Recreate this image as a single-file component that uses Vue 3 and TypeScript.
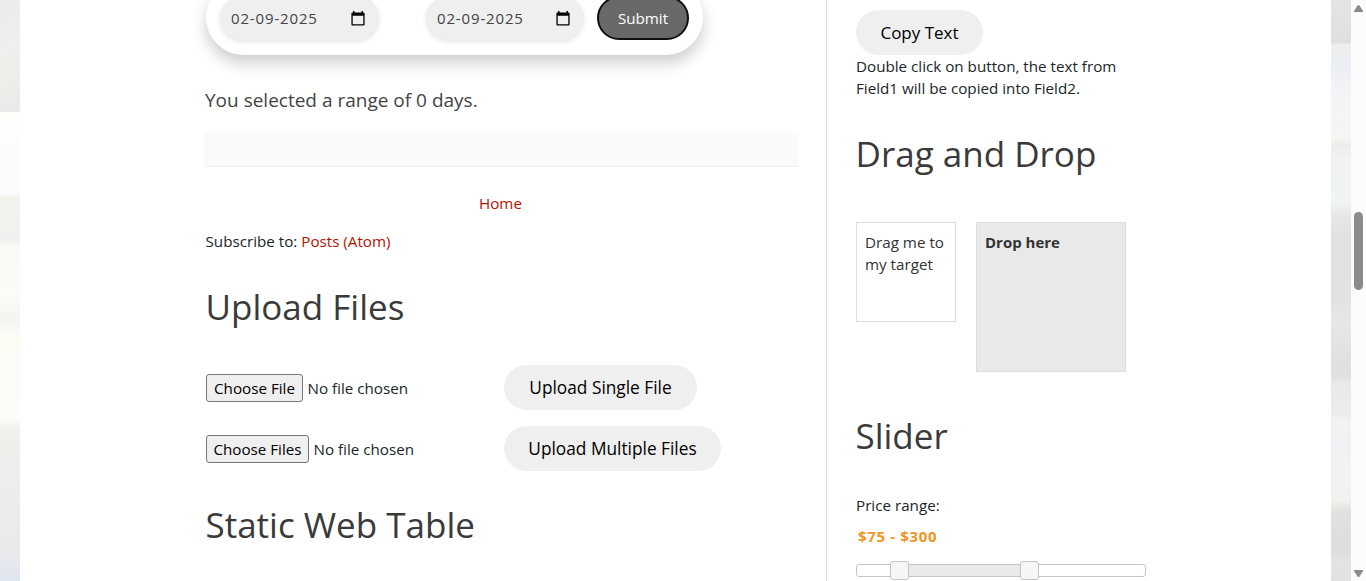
<script setup lang="ts">
import { ref } from 'vue'

const dates = ref(['02-09-2025', '02-09-2025'])
const uploads = [
  { choose: 'Choose File', action: 'Upload Single File', kind: 'single' },
  { choose: 'Choose Files', action: 'Upload Multiple Files', kind: 'multiple' },
]
const limit = 500
const low = 75
const high = 300
const pct = (v: number) => `${(v / limit) * 100}%`
</script>

<template>
  <div class="page">
    <div class="backdrop backdrop-left"></div>
    <main class="sheet">
      <section class="content">
        <div class="picker">
          <div v-for="(d, i) in dates" :key="i" class="date">
            <span class="date-text">{{ d }}</span>
            <svg class="calendar" viewBox="0 0 14 15" width="14" height="15">
              <path fill="#000" fill-rule="evenodd" d="M2 0h1.500v1.500h7V0H12v1.500h.6q1 0 1 1v11q0 1-1 1H1.400q-1 0-1-1v-11q0-1 1-1H2zM1.700 4.800v8.500h10.600V4.800z" />
            </svg>
          </div>
          <button class="submit">Submit</button>
        </div>
        <p class="result">You selected a range of 0 days.</p>
        <div class="post-footer"></div>
        <nav class="pager"><a>Home</a></nav>
        <p class="feed">Subscribe to: <a>Posts (Atom)</a></p>
        <h2 class="heading upload-heading">Upload Files</h2>
        <div v-for="u in uploads" :key="u.kind" class="upload-row">
          <div class="file">
            <button class="choose" :class="u.kind">{{ u.choose }}</button>
            <span class="nofile">No file chosen</span>
          </div>
          <button class="pill" :class="u.kind">{{ u.action }}</button>
        </div>
        <h2 class="heading table-heading">Static Web Table</h2>
      </section>
      <aside class="side">
        <button class="pill copy">Copy Text</button>
        <p class="hint">Double click on button, the text from<br />Field1 will be copied into Field2.</p>
        <h2 class="heading drag-heading">Drag and Drop</h2>
        <div class="dnd">
          <div class="drag">Drag me to<br />my target</div>
          <div class="drop">Drop here</div>
        </div>
        <h2 class="heading slider-heading">Slider</h2>
        <p class="price-label">Price range:</p>
        <p class="price">${{ low }} - ${{ high }}</p>
        <div class="slider">
          <div class="range" :style="{ left: pct(low), width: pct(high - low) }"></div>
          <div class="handle" :style="{ left: pct(low) }"></div>
          <div class="handle" :style="{ left: pct(high) }"></div>
        </div>
      </aside>
    </main>
    <div class="backdrop backdrop-right"></div>
    <div class="scrollbar">
      <svg width="9" height="7" viewBox="0 0 9 7"><path fill="#8b8b8b" d="M4.500 0q.6 0 1 .6L9 6v1H0V6L3.500.6q.4-.6 1-.6z" /></svg>
      <div class="thumb"></div>
      <svg width="9" height="7" viewBox="0 0 9 7"><path fill="#8b8b8b" d="M4.500 7q.6 0 1-.6L9 1V0H0v1l3.500 5.400q.4.6 1 .6z" /></svg>
    </div>
  </div>
</template>

<style>
html,
body {
  overflow: hidden;
}
</style>

<style scoped>
.page {
  display: flex;
  height: 581px;
  overflow: hidden;
  background: #fff;
  color: #212529;
  font-family: 'Open Sans', 'Noto Sans', sans-serif;
  font-size: 15.200px;
  line-height: 22px;
}
* {
  box-sizing: border-box;
}
p,
h2 {
  margin: 0;
  white-space: nowrap;
}
button {
  font: inherit;
  padding: 0;
  white-space: nowrap;
}
a {
  color: #b51200;
}
.backdrop {
  flex: none;
  width: 20px;
}
.backdrop-left {
  background:
    linear-gradient(142deg, #e9eaec 0, #eeeff1 44px, #ecefe9 58px, #e8eae8 100px) 0 0 / 20px 112px no-repeat,
    linear-gradient(#ebecec 0, #e9ebe8 110px, #fffffb 113px, #fcfcfe 155px, #fcfcfd 193px, #f2f3ed 198px, #f3f1ed 215px, #eff0ed 237px, #fafbf6 247px, #fcfaf5 280px, #fafbf7 300px, #f4f5f0 318px, #fcfcf5 335px, #fcfcf7 390px, #fdfdf7 419px, #f0f2eb 428px, #ecefea 455px, #ececee 490px, #eaeaed 550px, #dfe5ef 581px);
}
.backdrop-right {
  background: linear-gradient(#e5e4e3 0, #e0e0df 42px, #eff0ec 45px, #eaedf2 60px, #f2f4f7 90px, #f4f5f4 120px, #f5f5f1 139px, #ececeb 145px, #f0f2f4 160px, #f0f4f4 204px, #e6e7e6 215px, #e1e1e1 235px, #e2e2e2 300px, #e7e7e7 320px, #e0e0e0 365px, #e1e1e0 378px, #e9e9e9 382px, #ececeb 414px, #f2f2ef 420px, #eff1f4 442px, #f2f2f3 480px, #f1f1ee 500px, #e2e1df 512px, #dedddc 550px, #e3e3e3 560px, #e2e2e2 581px);
}
.sheet {
  display: flex;
  flex: none;
  width: 1311px;
  padding-left: 184px;
}
.content {
  width: 622px;
  flex: none;
  padding-left: 2px;
}
.picker {
  display: flex;
  align-items: center;
  width: 497px;
  height: 75px;
  margin-top: -20px;
  padding: 1px 14px 0;
  border-radius: 38px;
  background: #fff;
  box-shadow: 0 8px 16px rgba(0, 0, 0, 0.2);
}
.date {
  display: flex;
  align-items: center;
  justify-content: space-between;
  width: 159px;
  height: 44px;
  margin-right: 47px;
  padding: 0 14px 0 11px;
  border-radius: 22px;
  background: #efefef;
  color: #444;
  box-shadow: 0 2px 5px rgba(0, 0, 0, 0.1);
}
.date-text {
  font-size: 15px;
  letter-spacing: 0.850px;
}
.date + .date {
  width: 158px;
  margin-right: 13px;
}
.submit {
  width: 92px;
  height: 44px;
  border: 2px solid #111;
  border-radius: 22px;
  background: #696969;
  color: #fff;
}
.result {
  margin: 31px 0 0 -1px;
  line-height: 28px;
  font-size: 19px;
  color: #444;
}
.post-footer {
  width: 594px;
  height: 34px;
  margin: 19px 0 0 -2px;
  border-bottom: 1px solid #eee;
  background: #fafafa;
}
.pager {
  width: 589px;
  margin-top: 25px;
  text-align: center;
}
.feed {
  margin: 16px 0 0 -0.500px;
}
.heading {
  margin-left: -0.500px;
  font-size: 35px;
  font-weight: 400;
  line-height: 44px;
  color: #3a3a3a;
}
.upload-heading {
  margin-top: 33px;
  margin-bottom: 36px;
}
.upload-row {
  display: flex;
  height: 45px;
  margin-bottom: 16px;
}
.file {
  display: flex;
  align-items: center;
  gap: 4.500px;
  width: 298px;
}
.choose {
  width: 97px;
  height: 28px;
  border: 1px solid #767676;
  border-radius: 3px;
  background: #efefef;
  color: #000;
}
.choose.multiple {
  width: 103px;
}
.pill {
  width: 193px;
  height: 45px;
  border: 0;
  border-radius: 23px;
  background: #efefef;
  color: #000;
  font-size: 17.300px;
}
.pill.multiple {
  width: 217px;
}
.table-heading {
  margin-top: 32px;
}
.side {
  flex: none;
  width: 360px;
  height: 581px;
  padding: 10px 0 0 29px;
  border-left: 1px solid #ddd;
}
.copy {
  display: block;
  width: 127px;
  font-size: 17px;
}
.drag-heading {
  margin-top: 33px;
}
.dnd {
  display: flex;
  gap: 20px;
  align-items: flex-start;
  margin-top: 46px;
  color: #333;
}
.drag,
.drop {
  border: 1px solid #ddd;
  padding: 8px;
  white-space: nowrap;
}
.drag {
  width: 100px;
  height: 100px;
}
.drop {
  width: 150px;
  height: 150px;
  background: #e9e9e9;
  font-size: 15px;
  font-weight: 700;
}
.slider-heading {
  margin-top: 42px;
}
.price-label {
  margin-top: 36px;
}
.price {
  margin: 9px 0 0 2px;
  color: #f6931f;
  font-size: 15px;
  font-weight: 700;
  letter-spacing: 0.650px;
}
.slider {
  position: relative;
  width: 290px;
  height: 13px;
  margin-top: 17px;
  border: 1px solid #c5c5c5;
  border-radius: 3px;
  background: #fff;
}
.range {
  position: absolute;
  top: 0;
  height: 100%;
  background: #e9e9e9;
}
.handle {
  position: absolute;
  top: -4px;
  width: 19px;
  height: 19px;
  margin-left: -10px;
  border: 1px solid #c5c5c5;
  border-radius: 3px;
  background: #f6f6f6;
}
.scrollbar {
  display: flex;
  flex: none;
  flex-direction: column;
  align-items: center;
  width: 15px;
  padding: 5px 0 4px;
  background: #fcfcfc;
}
.thumb {
  width: 9px;
  height: 78px;
  margin: 200px 0 auto;
  border-radius: 5px;
  background: #8b8b8b;
}
</style>
